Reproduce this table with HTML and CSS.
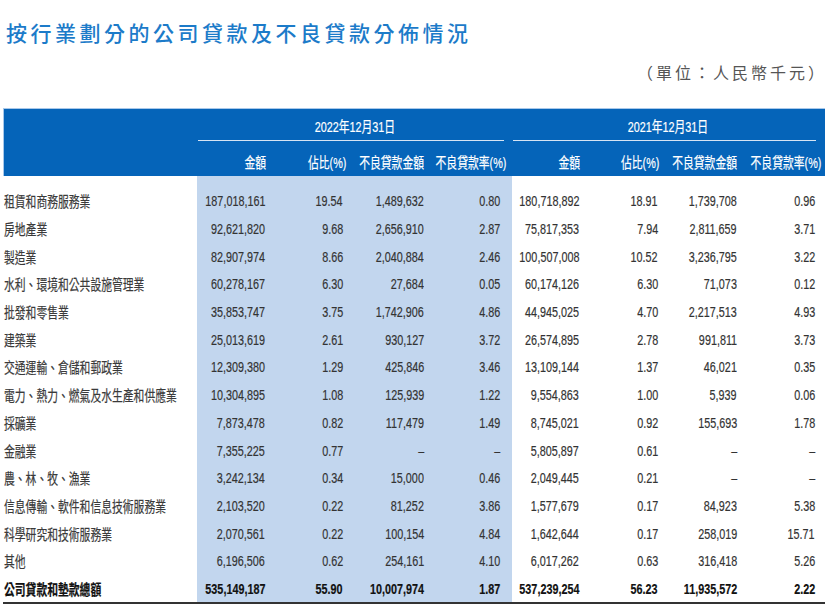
FILE: index.html
```html
<!DOCTYPE html>
<html lang="zh-Hant">
<head>
<meta charset="utf-8">
<title>按行業劃分的公司貸款及不良貸款分佈情況</title>
<link rel="stylesheet" href="styles.css">
</head>
<body>
<div class="page">
  <h1 class="title">按行業劃分的公司貸款及不良貸款分佈情況</h1>
  <div class="unit">（單位：人民幣千元）</div>
  <div class="tbl">
    <div class="head">
      <div class="row hr1">
        <div class="cell lab"></div>
        <div class="cell year y22"><span class="c cc">2022年12月31日</span></div>
        <div class="cell year y21"><span class="c cc">2021年12月31日</span></div>
      </div>
      <div class="row hr2">
        <div class="cell lab"></div>
        <div class="cell p1"><span class="c">金額</span></div>
        <div class="cell p2"><span class="c">佔比(%)</span></div>
        <div class="cell p3"><span class="c">不良貸款金額</span></div>
        <div class="cell p4"><span class="c">不良貸款率(%)</span></div>
        <div class="cell p5"><span class="c">金額</span></div>
        <div class="cell p6"><span class="c">佔比(%)</span></div>
        <div class="cell p7"><span class="c">不良貸款金額</span></div>
        <div class="cell p8"><span class="c">不良貸款率(%)</span></div>
      </div>
    </div>
    <div class="body">
      <div class="row spacer"><div class="cell lab"></div><div class="cell h"></div><div class="cell h"></div><div class="cell h"></div><div class="cell h"></div><div class="cell"></div><div class="cell"></div><div class="cell"></div><div class="cell"></div></div>
      <div class="row"><div class="cell lab"><span class="c cl">租賃和商務服務業</span></div><div class="cell h a1"><span class="c">187,018,161</span></div><div class="cell h a2"><span class="c">19.54</span></div><div class="cell h a3"><span class="c">1,489,632</span></div><div class="cell h a4"><span class="c">0.80</span></div><div class="cell b1"><span class="c">180,718,892</span></div><div class="cell b2"><span class="c">18.91</span></div><div class="cell b3"><span class="c">1,739,708</span></div><div class="cell b4"><span class="c">0.96</span></div></div>
      <div class="row"><div class="cell lab"><span class="c cl">房地產業</span></div><div class="cell h a1"><span class="c">92,621,820</span></div><div class="cell h a2"><span class="c">9.68</span></div><div class="cell h a3"><span class="c">2,656,910</span></div><div class="cell h a4"><span class="c">2.87</span></div><div class="cell b1"><span class="c">75,817,353</span></div><div class="cell b2"><span class="c">7.94</span></div><div class="cell b3"><span class="c">2,811,659</span></div><div class="cell b4"><span class="c">3.71</span></div></div>
      <div class="row"><div class="cell lab"><span class="c cl">製造業</span></div><div class="cell h a1"><span class="c">82,907,974</span></div><div class="cell h a2"><span class="c">8.66</span></div><div class="cell h a3"><span class="c">2,040,884</span></div><div class="cell h a4"><span class="c">2.46</span></div><div class="cell b1"><span class="c">100,507,008</span></div><div class="cell b2"><span class="c">10.52</span></div><div class="cell b3"><span class="c">3,236,795</span></div><div class="cell b4"><span class="c">3.22</span></div></div>
      <div class="row"><div class="cell lab"><span class="c cl">水利、環境和公共設施管理業</span></div><div class="cell h a1"><span class="c">60,278,167</span></div><div class="cell h a2"><span class="c">6.30</span></div><div class="cell h a3"><span class="c">27,684</span></div><div class="cell h a4"><span class="c">0.05</span></div><div class="cell b1"><span class="c">60,174,126</span></div><div class="cell b2"><span class="c">6.30</span></div><div class="cell b3"><span class="c">71,073</span></div><div class="cell b4"><span class="c">0.12</span></div></div>
      <div class="row"><div class="cell lab"><span class="c cl">批發和零售業</span></div><div class="cell h a1"><span class="c">35,853,747</span></div><div class="cell h a2"><span class="c">3.75</span></div><div class="cell h a3"><span class="c">1,742,906</span></div><div class="cell h a4"><span class="c">4.86</span></div><div class="cell b1"><span class="c">44,945,025</span></div><div class="cell b2"><span class="c">4.70</span></div><div class="cell b3"><span class="c">2,217,513</span></div><div class="cell b4"><span class="c">4.93</span></div></div>
      <div class="row"><div class="cell lab"><span class="c cl">建築業</span></div><div class="cell h a1"><span class="c">25,013,619</span></div><div class="cell h a2"><span class="c">2.61</span></div><div class="cell h a3"><span class="c">930,127</span></div><div class="cell h a4"><span class="c">3.72</span></div><div class="cell b1"><span class="c">26,574,895</span></div><div class="cell b2"><span class="c">2.78</span></div><div class="cell b3"><span class="c">991,811</span></div><div class="cell b4"><span class="c">3.73</span></div></div>
      <div class="row"><div class="cell lab"><span class="c cl">交通運輸、倉儲和郵政業</span></div><div class="cell h a1"><span class="c">12,309,380</span></div><div class="cell h a2"><span class="c">1.29</span></div><div class="cell h a3"><span class="c">425,846</span></div><div class="cell h a4"><span class="c">3.46</span></div><div class="cell b1"><span class="c">13,109,144</span></div><div class="cell b2"><span class="c">1.37</span></div><div class="cell b3"><span class="c">46,021</span></div><div class="cell b4"><span class="c">0.35</span></div></div>
      <div class="row"><div class="cell lab"><span class="c cl">電力、熱力、燃氣及水生產和供應業</span></div><div class="cell h a1"><span class="c">10,304,895</span></div><div class="cell h a2"><span class="c">1.08</span></div><div class="cell h a3"><span class="c">125,939</span></div><div class="cell h a4"><span class="c">1.22</span></div><div class="cell b1"><span class="c">9,554,863</span></div><div class="cell b2"><span class="c">1.00</span></div><div class="cell b3"><span class="c">5,939</span></div><div class="cell b4"><span class="c">0.06</span></div></div>
      <div class="row"><div class="cell lab"><span class="c cl">採礦業</span></div><div class="cell h a1"><span class="c">7,873,478</span></div><div class="cell h a2"><span class="c">0.82</span></div><div class="cell h a3"><span class="c">117,479</span></div><div class="cell h a4"><span class="c">1.49</span></div><div class="cell b1"><span class="c">8,745,021</span></div><div class="cell b2"><span class="c">0.92</span></div><div class="cell b3"><span class="c">155,693</span></div><div class="cell b4"><span class="c">1.78</span></div></div>
      <div class="row"><div class="cell lab"><span class="c cl">金融業</span></div><div class="cell h a1"><span class="c">7,355,225</span></div><div class="cell h a2"><span class="c">0.77</span></div><div class="cell h a3"><span class="c">–</span></div><div class="cell h a4"><span class="c">–</span></div><div class="cell b1"><span class="c">5,805,897</span></div><div class="cell b2"><span class="c">0.61</span></div><div class="cell b3"><span class="c">–</span></div><div class="cell b4"><span class="c">–</span></div></div>
      <div class="row"><div class="cell lab"><span class="c cl">農、林、牧、漁業</span></div><div class="cell h a1"><span class="c">3,242,134</span></div><div class="cell h a2"><span class="c">0.34</span></div><div class="cell h a3"><span class="c">15,000</span></div><div class="cell h a4"><span class="c">0.46</span></div><div class="cell b1"><span class="c">2,049,445</span></div><div class="cell b2"><span class="c">0.21</span></div><div class="cell b3"><span class="c">–</span></div><div class="cell b4"><span class="c">–</span></div></div>
      <div class="row"><div class="cell lab"><span class="c cl">信息傳輸、軟件和信息技術服務業</span></div><div class="cell h a1"><span class="c">2,103,520</span></div><div class="cell h a2"><span class="c">0.22</span></div><div class="cell h a3"><span class="c">81,252</span></div><div class="cell h a4"><span class="c">3.86</span></div><div class="cell b1"><span class="c">1,577,679</span></div><div class="cell b2"><span class="c">0.17</span></div><div class="cell b3"><span class="c">84,923</span></div><div class="cell b4"><span class="c">5.38</span></div></div>
      <div class="row"><div class="cell lab"><span class="c cl">科學研究和技術服務業</span></div><div class="cell h a1"><span class="c">2,070,561</span></div><div class="cell h a2"><span class="c">0.22</span></div><div class="cell h a3"><span class="c">100,154</span></div><div class="cell h a4"><span class="c">4.84</span></div><div class="cell b1"><span class="c">1,642,644</span></div><div class="cell b2"><span class="c">0.17</span></div><div class="cell b3"><span class="c">258,019</span></div><div class="cell b4"><span class="c">15.71</span></div></div>
      <div class="row"><div class="cell lab"><span class="c cl">其他</span></div><div class="cell h a1"><span class="c">6,196,506</span></div><div class="cell h a2"><span class="c">0.62</span></div><div class="cell h a3"><span class="c">254,161</span></div><div class="cell h a4"><span class="c">4.10</span></div><div class="cell b1"><span class="c">6,017,262</span></div><div class="cell b2"><span class="c">0.63</span></div><div class="cell b3"><span class="c">316,418</span></div><div class="cell b4"><span class="c">5.26</span></div></div>
      <div class="row total"><div class="cell lab"><span class="c cl">公司貸款和墊款總額</span></div><div class="cell h a1"><span class="c">535,149,187</span></div><div class="cell h a2"><span class="c">55.90</span></div><div class="cell h a3"><span class="c">10,007,974</span></div><div class="cell h a4"><span class="c">1.87</span></div><div class="cell b1"><span class="c">537,239,254</span></div><div class="cell b2"><span class="c">56.23</span></div><div class="cell b3"><span class="c">11,935,572</span></div><div class="cell b4"><span class="c">2.22</span></div></div>
    </div>
  </div>
</div>
</body>
</html>
```
FILE: styles.css
```css
html, body {
  margin: 0;
  padding: 0;
  background: #ffffff;
}

.page {
  padding: 0 4px 0 3px;
  font-family: "Liberation Sans", "Noto Sans CJK TC", sans-serif;
}

.title {
  margin: 0;
  padding: 21px 0 0 3px;
  font-family: "Noto Sans CJK TC", sans-serif;
  font-size: 21px;
  line-height: 22px;
  font-weight: 500;
  letter-spacing: 3.5px;
  color: #1c7bc9;
}

.unit {
  margin-top: 19px;
  padding-right: 0;
  text-align: right;
  font-family: "Noto Sans CJK TC", sans-serif;
  font-size: 16px;
  line-height: 20px;
  letter-spacing: 3px;
  color: #555555;
}

.tbl {
  margin-top: 26px;
  width: 822px;
  font-size: 15px;
}

.row {
  display: grid;
  grid-template-columns: 194px 73px 78px 80px 84px 72px 78px 79px 84px;
}

.cell {
  display: flex;
  align-items: center;
  justify-content: flex-end;
  white-space: nowrap;
  min-width: 0;
}

/* condensed look */
.c {
  display: inline-block;
  white-space: nowrap;
  transform: scaleX(0.72);
  transform-origin: right center;
  -webkit-text-stroke: 0.2px currentColor;
}
.cl { transform-origin: left center; }
.cc { transform-origin: center center; }

/* header */
.head {
  background: #0564b9;
  color: #ffffff;
  border-top: 1px solid #a8c8ea;
  border-left: 1px solid #a8c8ea;
}
.head .row .lab { justify-content: flex-start; }

.hr1 {
  height: 32px;
}
.hr1 .year {
  justify-content: center;
  align-items: flex-end;
  padding-bottom: 4px;
  padding-left: 7px;
  border-bottom: 1px solid #d6e4f4;
}
.hr1 .y22 {
  grid-column: 2 / 6;
  margin-right: 9px;
}
.hr1 .y21 {
  grid-column: 6 / 10;
  margin-right: 10px;
}

.hr2 {
  height: 35px;
}
.hr2 .cell {
  padding-top: 5px;
}
.hr2 .p1 { padding-right: 5px; }
.hr2 .p2 { padding-right: 3px; }
.hr2 .p3 { padding-right: 5px; }
.hr2 .p4 { padding-right: 7px; }
.hr2 .p5 { padding-right: 5px; }
.hr2 .p6 { padding-right: 4px; }
.hr2 .p7 { padding-right: 5px; }
.hr2 .p8 { padding-right: 5px; }

/* body */
.body .row {
  height: 27.7px;
  color: #333333;
}
.body .row.spacer {
  height: 11px;
}
.body .lab {
  justify-content: flex-start;
  padding-left: 1px;
  color: #3a3a3a;
}

.cell.h {
  background: #c2d6ee;
}

.a1 { padding-right: 5px; }
.a2 { padding-right: 5px; }
.a3 { padding-right: 4px; }
.a4 { padding-right: 12px; }
.b1 { padding-right: 5px; }
.b2 { padding-right: 4px; }
.b3 { padding-right: 4px; }
.b4 { padding-right: 10px; }

.row.total {
  font-weight: 700;
  border-bottom: 2px solid #333333;
}
.row.total .cell,
.row.total .lab {
  color: #111111;
}
```
